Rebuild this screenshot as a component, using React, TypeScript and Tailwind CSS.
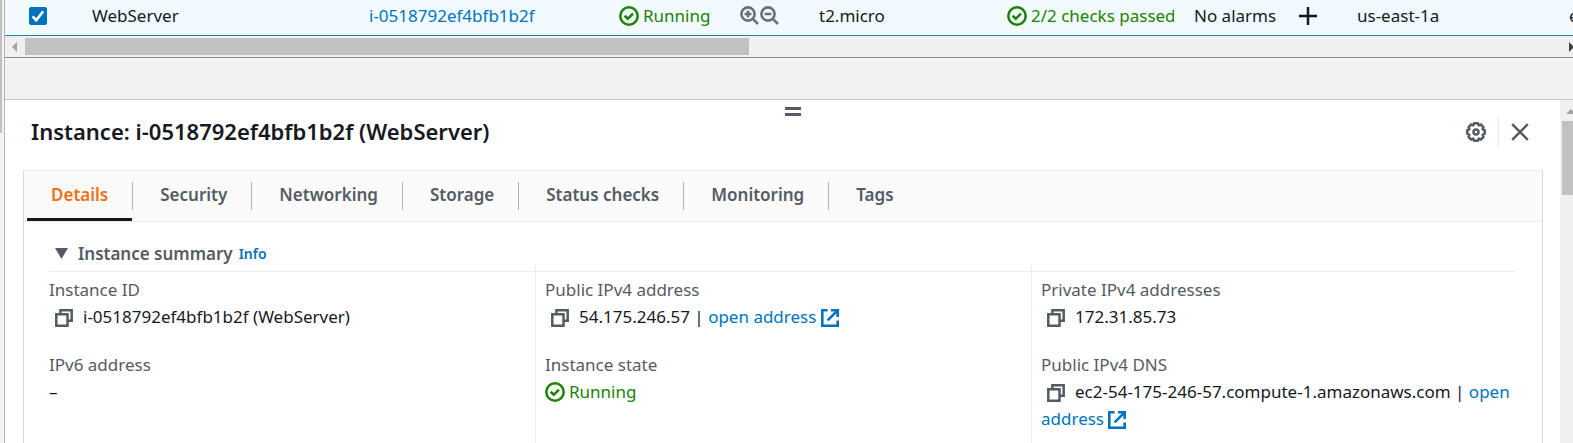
import type { ReactNode } from 'react';

const INSTANCE_ID = 'i-0518792ef4bfb1b2f';

function CheckCircle() {
  return (
    <svg viewBox="0 0 20 20" className="inline-block size-5 shrink-0" fill="none" stroke="currentColor" strokeWidth="2.5" aria-hidden="true">
      <circle cx="10" cy="10" r="8.7" />
      <path d="M5.6 9.8l3.2 2.9 5.2-5" />
    </svg>
  );
}

function Magnifier({ plus }: { plus?: boolean }) {
  return (
    <svg viewBox="0 0 19 19" className="size-[19px]" fill="none" stroke="currentColor" strokeWidth="2.6" aria-hidden="true">
      <circle cx="8" cy="8" r="6.6" />
      <path d="M12.6 12.6l5.4 5.4M4.6 8h6.8" />
      {plus && <path d="M8 4.6v6.8" />}
    </svg>
  );
}

function CopyButton({ label }: { label: string }) {
  return (
    <button type="button" aria-label={`Copy ${label}`} className="mr-2.5 ml-1.5 inline-block align-middle text-[#545b64]">
      <svg viewBox="0 0 18 18" className="block size-[18px]" fill="none" stroke="currentColor" strokeWidth="2.5" aria-hidden="true">
        <path d="M1.3 5.2h11.2v11.5H1.3z" />
        <path d="M5.4 5V1.3h11.3v10.5h-4" />
      </svg>
    </button>
  );
}

function ExternalLink({ children }: { children: ReactNode }) {
  return (
    <a href="#open" className="text-[#0073bb]">
      {children}{' '}
      <svg viewBox="0 0 18 18" className="inline-block size-[18px] align-middle" fill="none" stroke="currentColor" strokeWidth="2.6" aria-hidden="true">
        <path d="M6.6 1.3H1.3v15.4h15.4v-5.3" />
        <path d="M10 1.3h6.7V8M16.4 1.6L6.6 11.4" />
      </svg>
    </a>
  );
}

function Running() {
  return (
    <span className="flex items-center gap-1 text-[#1d8102]">
      <CheckCircle />
      Running
    </span>
  );
}

function Field({ label, children }: { label: string; children: ReactNode }) {
  return (
    <div className="pb-[21px]">
      <dt className="text-[#545b64]">{label}</dt>
      <dd>{children}</dd>
    </div>
  );
}

function InstanceRow() {
  return (
    <div className="shrink-0 overflow-hidden border-b border-[#1c86a3]">
      <table className="w-[1754px] table-fixed border-collapse">
        <colgroup>
          <col className="w-[77px]" />
          <col className="w-[277px]" />
          <col className="w-[250px]" />
          <col className="w-[200px]" />
          <col className="w-[188px]" />
          <col className="w-[187px]" />
          <col className="w-[163px]" />
          <col className="w-[212px]" />
          <col className="w-[200px]" />
        </colgroup>
        <tbody>
          <tr className="h-[35px] bg-[#f1faff] whitespace-nowrap">
            <td className="px-6 pb-1">
              <span className="relative block size-[18px]">
                <input
                  type="checkbox"
                  defaultChecked
                  aria-label="Select WebServer"
                  className="peer block size-[18px] appearance-none rounded-[2px] border border-[#687078] bg-white checked:border-[#0073bb] checked:bg-[#0073bb]"
                />
                <svg viewBox="0 0 18 18" className="pointer-events-none absolute inset-0 hidden peer-checked:block" fill="none" stroke="#fff" strokeWidth="2.6" aria-hidden="true">
                  <path d="M3.6 9.4l3.6 3.8 7-9" />
                </svg>
              </span>
            </td>
            <td className="px-2.5 pb-1">WebServer</td>
            <td className="px-2.5 pb-1">
              <a href="#instance" className="text-[#0073bb]">{INSTANCE_ID}</a>
            </td>
            <td className="px-2.5 pb-1">
              <div className="flex items-center">
                <Running />
                <div className="ml-auto flex gap-px pr-5 text-[#687078]">
                  <button type="button" aria-label="Add filter"><Magnifier plus /></button>
                  <button type="button" aria-label="Exclude filter"><Magnifier /></button>
                </div>
              </div>
            </td>
            <td className="px-2.5 pb-1">t2.micro</td>
            <td className="px-2.5 pb-1">
              <div className="flex items-center gap-1 overflow-hidden text-[#1d8102]">
                <CheckCircle />
                2/2 checks passed
              </div>
            </td>
            <td className="px-2.5 pb-1">
              <div className="flex items-center justify-between">
                No alarms
                <button type="button" aria-label="Add alarm" className="mr-5">
                  <svg viewBox="0 0 18 18" className="block size-[18px]" stroke="currentColor" strokeWidth="2.5" aria-hidden="true">
                    <path d="M9 0v18M0 9h18" />
                  </svg>
                </button>
              </div>
            </td>
            <td className="px-2.5 pb-1">us-east-1a</td>
            <td className="px-2.5 pb-1">ec2-54-175</td>
          </tr>
        </tbody>
      </table>
    </div>
  );
}

const TABS = ['Details', 'Security', 'Networking', 'Storage', 'Status checks', 'Monitoring', 'Tags'];

export default function App() {
  return (
    <div className="flex h-screen overflow-hidden bg-[#f2f2f2] font-['Noto_Sans',sans-serif] text-[17px] leading-[27px] text-[#16191f]">
      <div className="w-1 shrink-0">
        <div className="h-[133px] w-0.5 bg-[#c1c1c1]" />
      </div>
      <div className="flex min-w-0 flex-1 flex-col border-l border-[#b4b8bb]">
        <InstanceRow />
        <div className="flex h-[22px] shrink-0 items-center border-b border-[#7f8c8d] bg-[#f0f0f0]">
          <svg viewBox="0 0 20 10" className="h-2.5 w-5 shrink-0" aria-hidden="true">
            <path d="M12 0v10L7 5z" fill="#a3a3a3" />
          </svg>
          <div className="h-[17px] w-[46.2%] bg-[#c1c1c1]" />
          <svg viewBox="0 0 4 10" className="ml-auto h-2.5 w-1" aria-hidden="true">
            <path d="M0 0v10l5-5z" fill="#404040" />
          </svg>
        </div>
        <div className="h-[41px] shrink-0" />

        <div className="flex min-h-0 flex-1 border-t border-[#c3c8c9] bg-white">
          <section className="flex min-w-0 flex-1 flex-col pr-[17px] pl-[18px]">
            <div className="flex h-4 shrink-0 items-end justify-center pl-5">
              <div className="h-[9px] w-4 border-y-[3px] border-[#545b64]" />
            </div>
            <header className="flex h-[54px] shrink-0 items-start justify-between pr-3.5 pl-2">
              <h2 className="text-[22px] leading-[30px] font-semibold">Instance: {INSTANCE_ID} (WebServer)</h2>
              <div className="flex h-8 items-center text-[#545b64]">
                <button type="button" aria-label="Settings">
                  <svg viewBox="0 0 20 20" className="block size-5" fill="none" stroke="currentColor" strokeWidth="2.5" strokeLinejoin="round" aria-hidden="true">
                    <path d="M8.1 1.3h3.8l.8 2.1 2.2-.9 2.6 2.6-.9 2.2 2.1.8v3.8l-2.1.8.9 2.2-2.6 2.6-2.2-.9-.8 2.1H8.1l-.8-2.1-2.2.9-2.6-2.6.9-2.2-2.1-.8V8.1l2.1-.8-.9-2.2 2.6-2.6 2.2.9z" />
                    <circle cx="10" cy="10" r="2.5" />
                  </svg>
                </button>
                <div className="mx-3 h-8 w-px bg-[#eaeded]" />
                <button type="button" aria-label="Close">
                  <svg viewBox="0 0 18 18" className="block size-[18px]" stroke="currentColor" strokeWidth="2.6" aria-hidden="true">
                    <path d="M1.2 1.2l15.6 15.6M16.8 1.2L1.2 16.8" />
                  </svg>
                </button>
              </div>
            </header>

            <div className="min-h-0 flex-1 overflow-hidden border-x border-t border-[#d5dbdb] border-t-[#eaeded]">
              <div role="tablist" className="flex h-[51px] items-stretch border-b border-[#eaeded] bg-[#fafafa]">
                {TABS.map((tab, i) => (
                  <div key={tab} className="flex items-center">
                    <button
                      type="button"
                      role="tab"
                      aria-selected={i === 0}
                      className={
                        i === 0
                          ? 'ml-[3px] h-full border-b-[3px] border-[#16191f] px-6 font-semibold text-[#ec7211]'
                          : 'ml-[3px] h-full border-b-[3px] border-transparent px-6 font-semibold text-[#545b64]'
                      }
                    >
                      {tab}
                    </button>
                    {i < TABS.length - 1 && <span className="h-7 w-px bg-[#aab7b8]" />}
                  </div>
                ))}
              </div>

              <div className="px-[15px] pt-[18px]">
                <div className="mr-3 ml-2.5 flex h-8 items-start gap-1.5 border-b border-[#eaeded]">
                  <button type="button" aria-expanded="true" className="flex items-center gap-2.5 pl-1.5 font-semibold text-[#545b64]">
                    <svg viewBox="0 0 13 11" className="h-[11px] w-[13px]" aria-hidden="true">
                      <path d="M0 0h13L6.5 11z" fill="currentColor" />
                    </svg>
                    Instance summary
                  </button>
                  <a href="#info" className="text-sm leading-[27px] font-semibold text-[#0073bb]">Info</a>
                </div>
                <dl className="-mt-1.5 grid grid-cols-3">
                  <div className="border-l border-transparent pt-2.5 pl-[9px]">
                    <Field label="Instance ID">
                      <CopyButton label="instance ID" />
                      {INSTANCE_ID} (WebServer)
                    </Field>
                    <Field label="IPv6 address">–</Field>
                  </div>
                  <div className="border-l border-[#eaeded] pt-2.5 pl-[9px]">
                    <Field label="Public IPv4 address">
                      <CopyButton label="public IPv4 address" />
                      54.175.246.57 | <ExternalLink>open address</ExternalLink>
                    </Field>
                    <Field label="Instance state">
                      <Running />
                    </Field>
                  </div>
                  <div className="border-l border-[#eaeded] pt-2.5 pl-[9px]">
                    <Field label="Private IPv4 addresses">
                      <CopyButton label="private IPv4 address" />
                      172.31.85.73
                    </Field>
                    <Field label="Public IPv4 DNS">
                      <CopyButton label="public IPv4 DNS" />
                      ec2-54-175-246-57.compute-1.amazonaws.com | <ExternalLink>open address</ExternalLink>
                    </Field>
                  </div>
                </dl>
              </div>
            </div>
          </section>
          <div className="w-[13px] shrink-0 bg-[#f0f0f0] pl-0.5">
            <svg viewBox="0 0 11 21" className="h-[21px] w-[11px]" aria-hidden="true">
              <path d="M4 14h10L9 9z" fill="#a3a3a3" />
            </svg>
            <div className="h-[74px] bg-[#c1c1c1]" />
          </div>
        </div>
      </div>
    </div>
  );
}
